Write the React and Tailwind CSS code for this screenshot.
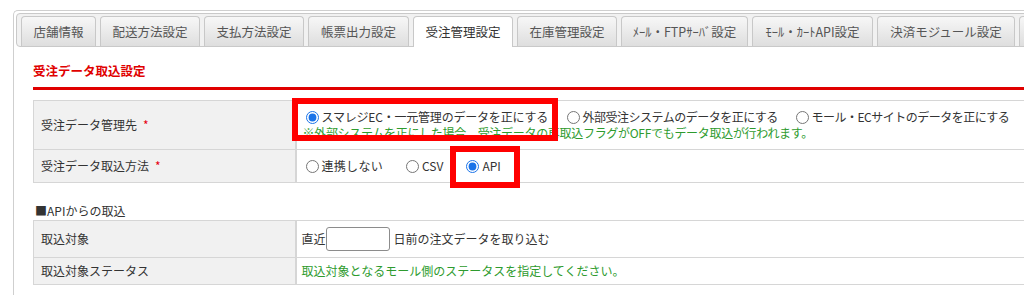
import React from 'react';

const tabs = [
  { label: '店舗情報', w: 'w-[75px]' },
  { label: '配送方法設定', w: 'w-[100px]' },
  { label: '支払方法設定', w: 'w-[100px]' },
  { label: '帳票出力設定', w: 'w-[101px]' },
  { label: '受注管理設定', w: 'w-[100px]', active: true },
  { label: '在庫管理設定', w: 'w-[100px]' },
  { label: 'ﾒｰﾙ・FTPｻｰﾊﾞ設定', w: 'w-[127px]' },
  { label: 'ﾓｰﾙ・ｶｰﾄAPI設定', w: 'w-[121px]' },
  { label: '決済モジュール設定', w: 'w-[138px]' },
  { label: '', w: 'w-[100px]' },
];

const Radio = ({ checked, label, className = '' }) => (
  <label className={`flex items-center shrink-0 ${className}`}>
    <input type="radio" readOnly checked={!!checked} className="ml-[4px] mr-[3px] w-[13px] h-[13px] accent-[#1a73e8]" />
    <span>{label}</span>
  </label>
);

const Req = () => <span className="text-[#e60012] ml-[6px]">*</span>;

const App = () => {
  return (
    <div className="w-[1024px] h-[295px] overflow-hidden bg-white pt-[10px] pl-[13px] font-['Noto_Sans_CJK_JP','Noto_Sans',sans-serif] text-[12px] text-[#333]">
      <div className="w-[1060px] h-[300px] border-l border-t border-[#cfcfcf] rounded-tl-[5px] p-[2px]">
        {/* tab bar */}
        <div className="h-[34px] flex items-end gap-[4px] pl-[4px] border border-[#c9c9c9] rounded-[4px] bg-[#f1f1f1]">
          {tabs.map((t, i) => (
            <div
              key={i}
              className={`${t.w} shrink-0 flex items-center justify-center rounded-t-[4px] border border-b-0 border-[#c8c8c8] text-[12.5px] leading-4 ${
                t.active
                  ? 'h-[31px] -mb-px bg-white text-[#333] relative z-10'
                  : 'h-[30px] bg-gradient-to-b from-[#f7f7f7] to-[#dedede] text-[#555]'
              }`}
            >
              {t.label}
            </div>
          ))}
        </div>

        <div className="pl-[17px]">
          <h2 className="mt-[16px] text-[12.5px] leading-4 font-bold text-[#e00000]">受注データ取込設定</h2>
          <div className="mt-[8px] h-[3px] bg-[#e00000]" />

          {/* settings table */}
          <div className="relative mt-[10px]">
            <table className="w-full border-collapse">
              <tbody>
                <tr className="border border-[#d6d6d6]">
                  <td className="w-[262px] bg-[#f1f1f1] border-r-2 border-[#d6d6d6] px-[7px] align-middle leading-4">
                    受注データ管理先<Req />
                  </td>
                  <td className="pt-[8px] pb-[8px] pl-[5px] leading-4">
                    <div className="flex">
                      <Radio checked className="w-[261px] tracking-[-0.2px]" label="スマレジEC・一元管理のデータを正にする" />
                      <Radio className="w-[229px] tracking-[-0.5px]" label="外部受注システムのデータを正にする" />
                      <Radio className="tracking-[-0.5px]" label="モール・ECサイトのデータを正にする" />
                    </div>
                    <p className="pl-[1px] tracking-[-0.3px] text-[#2e9b2e]">
                      ※外部システムを正にした場合、受注データの再取込フラグがOFFでもデータ取込が行われます。
                    </p>
                  </td>
                </tr>
                <tr className="border border-[#d6d6d6]">
                  <td className="bg-[#f1f1f1] border-r-2 border-[#d6d6d6] px-[7px] leading-4">
                    受注データ取込方法<Req />
                  </td>
                  <td className="py-[8px] pl-[5px] leading-4">
                    <div className="flex gap-[19px]">
                      <Radio className="tracking-[0.3px]" label="連携しない" />
                      <Radio label="CSV" />
                      <Radio checked label="API" />
                    </div>
                  </td>
                </tr>
              </tbody>
            </table>
            {/* annotation boxes */}
            <div className="absolute left-[259px] top-[-2px] w-[266px] h-[43px] border-[6px] border-[#ff0000]" />
            <div className="absolute left-[417px] top-[46px] w-[70px] h-[42px] border-[6px] border-[#ff0000]" />
          </div>

          <p className="mt-[20px] leading-4 pl-[2px]">■APIからの取込</p>
          <table className="mt-[1px] w-full border-collapse">
            <tbody>
              <tr className="border border-[#d6d6d6]">
                <td className="w-[262px] bg-[#f1f1f1] border-r-2 border-[#d6d6d6] px-[7px] leading-4">取込対象</td>
                <td className="py-[6px] pl-[5px] leading-4">
                  <div className="flex items-center">
                    <span>直近</span>
                    <input type="text" className="w-[64px] h-[24px] border border-[#8c8c8c] rounded-[3px] bg-white" />
                    <span className="ml-[4px]">日前の注文データを取り込む</span>
                  </div>
                </td>
              </tr>
              <tr className="border border-[#d6d6d6]">
                <td className="bg-[#f1f1f1] border-r-2 border-[#d6d6d6] px-[7px] py-[5px] leading-4">取込対象ステータス</td>
                <td className="py-[5px] pl-[5px] leading-4 text-[#2e9b2e]">
                  取込対象となるモール側のステータスを指定してください。
                </td>
              </tr>
            </tbody>
          </table>
        </div>
      </div>
    </div>
  );
};

export default App;
